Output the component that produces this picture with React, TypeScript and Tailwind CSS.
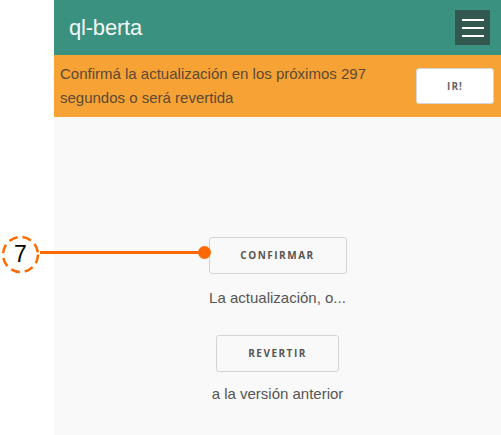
export default function App() {
  return (
    <div className="relative flex w-[501px] h-[435px] bg-white font-['Liberation_Sans',Arial,sans-serif]">
      {/* left gutter */}
      <div className="w-[54px] shrink-0 bg-white" />

      {/* page */}
      <div className="flex-1 flex flex-col bg-[#f9f9f9]">
        {/* header */}
        <header className="h-[55px] flex items-center justify-between bg-[#3a9180] pl-[15px] pr-[11px]">
          <div className="text-[22px] text-[#f4f8f6] tracking-[-0.2px]">ql-berta</div>
          <button className="w-[35px] h-[35px] bg-[#33584f] flex flex-col items-center justify-center gap-[6px]">
            <span className="block w-[22px] h-[2px] bg-white" />
            <span className="block w-[22px] h-[2px] bg-white" />
            <span className="block w-[22px] h-[2px] bg-white" />
          </button>
        </header>

        {/* banner */}
        <div className="h-[62px] flex items-center justify-between bg-[#f7a235] pl-[6px] pr-[7px]">
          <p className="w-[335px] text-[15px] leading-[24px] text-[#5b4a36]">
            Confirmá la actualización en los próximos 297 segundos o será revertida
          </p>
          <button className="w-[78px] h-[36px] bg-white border border-[#d6d6d6] rounded-[3px] font-['Open_Sans',sans-serif] font-bold text-[10px] tracking-[1px] text-[#666]">
            IR!
          </button>
        </div>

        {/* body */}
        <div className="flex-1 flex flex-col items-center pt-[120px]">
          <button className="w-[138px] h-[37px] bg-[#f9f9f9] border border-[#d4d4d4] rounded-[3px] font-['Open_Sans',sans-serif] font-bold text-[10px] tracking-[1.5px] text-[#555]">
            CONFIRMAR
          </button>
          <p className="mt-[14px] text-[15px] leading-[20px] text-[#555]">La actualización, o...</p>
          <button className="mt-[27px] w-[123px] h-[37px] bg-[#f9f9f9] border border-[#d4d4d4] rounded-[3px] font-['Open_Sans',sans-serif] font-bold text-[10px] tracking-[1.5px] text-[#555]">
            REVERTIR
          </button>
          <p className="mt-[12px] text-[15px] leading-[20px] text-[#555]">a la versión anterior</p>
        </div>
      </div>

      {/* annotation */}
      <div className="absolute left-[1px] top-[235px] w-[39px] h-[39px] flex items-center justify-center">
        <svg className="absolute inset-0" width="39" height="39" viewBox="0 0 39 39">
          <circle cx="19.5" cy="19.5" r="17.5" fill="none" stroke="#ff6a00" strokeWidth="2.5" strokeDasharray="9 5" />
        </svg>
        <span className="relative text-[23px] leading-none text-black">7</span>
      </div>
      <div className="absolute left-[40px] top-[251px] w-[165px] h-[3px] bg-[#ff6a00]" />
      <div className="absolute left-[198px] top-[246px] w-[13px] h-[13px] rounded-full bg-[#ff6a00]" />
    </div>
  );
}
